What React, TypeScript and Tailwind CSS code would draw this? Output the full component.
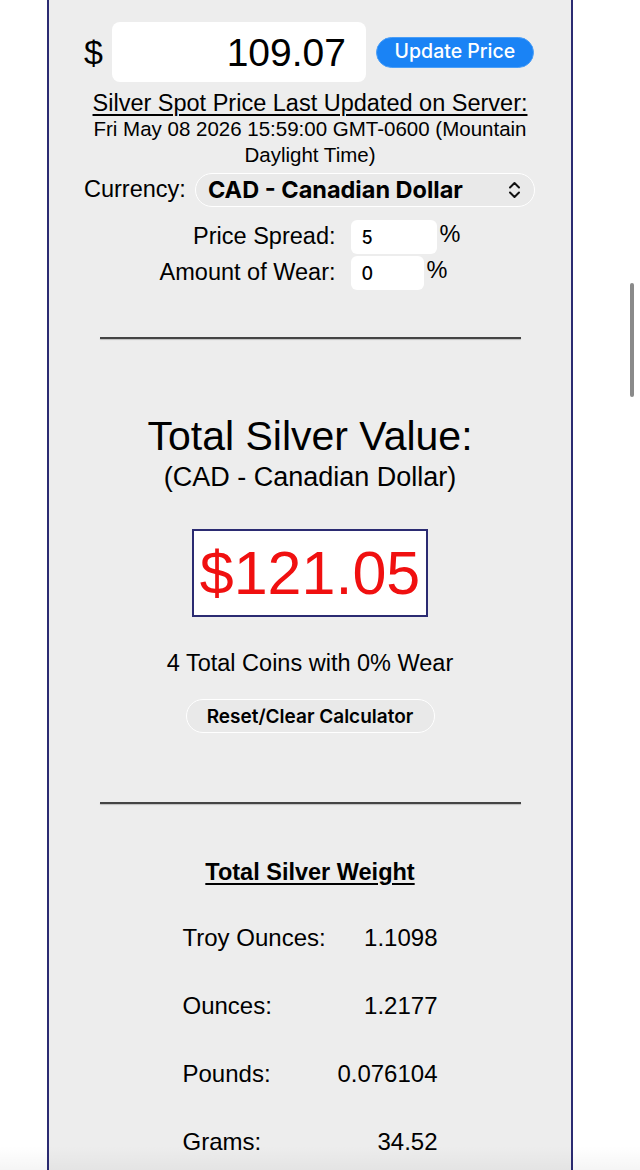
import React from "react";

const SYS = { fontFamily: 'Inter, "Liberation Sans", sans-serif' };

export default function App() {
  const rows: [string, string][] = [
    ["Troy Ounces:", "1.1098"],
    ["Ounces:", "1.2177"],
    ["Pounds:", "0.076104"],
    ["Grams:", "34.52"],
  ];
  return (
    <div
      className="relative w-[640px] h-[1170px] overflow-hidden bg-white text-black"
      style={{ fontFamily: '"Liberation Sans", Arial, sans-serif' }}
    >
      <div className="ml-[47px] w-[526px] h-[1170px] bg-[#ededed] border-x-2 border-[#2b2b72] flex flex-col items-center">
        {/* price row */}
        <div className="flex items-center mt-[22px] w-full pl-[35px]">
          <span className="text-[34px] leading-none mr-[9px]">$</span>
          <div className="w-[254px] h-[60px] bg-white rounded-[8px] flex items-center justify-end pr-[20px] text-[39px] leading-none">
            109.07
          </div>
          <button
            style={SYS}
            className="ml-[10px] w-[158px] h-[31px] rounded-full bg-[#1a83f5] border border-[#4a9ef7] text-white text-[19.5px] font-medium leading-none flex items-center justify-center"
          >
            Update Price
          </button>
        </div>
        {/* updated */}
        <div className="mt-[8px] text-[23.5px] leading-[26px] underline underline-offset-[3px] decoration-[1.5px]">
          Silver Spot Price Last Updated on Server:
        </div>
        <div className="text-[20.5px] leading-[26px] text-center w-[470px]">
          Fri May 08 2026 15:59:00 GMT-0600 (Mountain Daylight Time)
        </div>
        {/* currency */}
        <div className="flex items-center mt-[5px] w-full pl-[35px]">
          <span className="text-[23.5px] leading-none mr-[9px]">Currency:</span>
          <div className="w-[340px] h-[34px] rounded-full bg-[#e9e9e9] border border-white flex items-center pl-[12px] pr-[13px]">
            <span style={SYS} className="font-bold text-[23.5px] leading-none flex-1">CAD - Canadian Dollar</span>
            <svg width="13" height="18" viewBox="0 0 13 18" fill="none" stroke="#111" strokeWidth="2" strokeLinecap="round" strokeLinejoin="round">
              <path d="M2 6.5 L6.5 2 L11 6.5" />
              <path d="M2 11.5 L6.5 16 L11 11.5" />
            </svg>
          </div>
        </div>
        {/* spread / wear */}
        <div className="mt-[13px] grid grid-cols-[auto_auto] gap-y-[2px] items-center">
          <span className="text-[23.5px] text-right pr-[15px] leading-none">Price Spread:</span>
          <div className="flex items-start">
            <div style={SYS} className="w-[86px] h-[34px] bg-white rounded-[6px] flex items-center pl-[11px] text-[18px] font-medium">5</div>
            <span className="text-[23.5px] leading-none ml-[3px] mt-[3px]">%</span>
          </div>
          <span className="text-[23.5px] text-right pr-[15px] leading-none">Amount of Wear:</span>
          <div className="flex items-start">
            <div style={SYS} className="w-[73px] h-[34px] bg-white rounded-[6px] flex items-center pl-[11px] text-[18px] font-medium">0</div>
            <span className="text-[23.5px] leading-none ml-[3px] mt-[3px]">%</span>
          </div>
        </div>
        <div className="mt-[47px] w-[421px] h-[2px] bg-[#444] shadow-[0_1px_1px_rgba(0,0,0,0.2)]" />
        {/* total value */}
        <div className="mt-[74px] text-[41px] leading-[46px]">Total Silver Value:</div>
        <div className="mt-[3px] text-[27px] leading-[30px]">(CAD - Canadian Dollar)</div>
        <div className="mt-[37px] w-[236px] h-[88px] bg-white border-2 border-[#2b2b72] flex items-center justify-center text-[#f01010] text-[61px] leading-none">
          $121.05
        </div>
        <div className="mt-[33px] text-[23.5px] leading-[26px]">4 Total Coins with 0% Wear</div>
        <button
          style={SYS}
          className="mt-[23px] w-[249px] h-[34px] rounded-full bg-[#e9e9e9] border border-white font-semibold text-[19px] leading-none flex items-center justify-center"
        >
          Reset/Clear Calculator
        </button>
        <div className="mt-[69px] w-[421px] h-[2px] bg-[#444] shadow-[0_1px_1px_rgba(0,0,0,0.2)]" />
        <div className="mt-[54px] font-bold text-[23.5px] leading-[28px] underline underline-offset-[3px]">
          Total Silver Weight
        </div>
        <div className="mt-[38px] flex flex-col gap-[40px] w-[255px]">
          {rows.map(([k, v]) => (
            <div key={k} className="flex justify-between text-[24px] leading-[28px]">
              <span>{k}</span>
              <span>{v}</span>
            </div>
          ))}
        </div>
      </div>
      <div className="absolute right-[6px] top-[283px] w-[4px] h-[114px] rounded-full bg-[#8a8a8a]" />
      <div className="absolute left-0 right-0 bottom-0 h-[24px] bg-gradient-to-b from-transparent to-[rgba(0,0,0,0.04)]" />
    </div>
  );
}
